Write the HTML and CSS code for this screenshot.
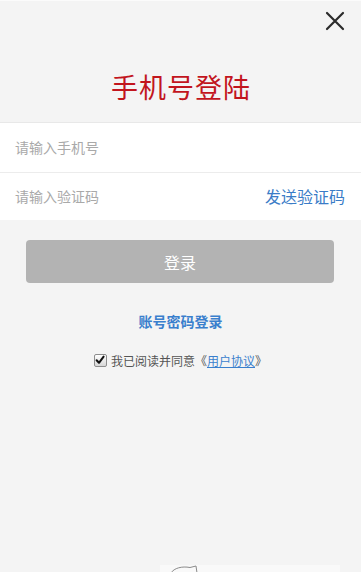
FILE: index.html
```html
<!DOCTYPE html>
<html lang="zh-CN">
<head>
<meta charset="utf-8">
<title>手机号登陆</title>
<link rel="stylesheet" href="styles.css">
</head>
<body>
<div class="page">
  <div class="topbar">
    <svg class="close" width="20" height="20" viewBox="0 0 20 20" aria-label="关闭">
      <path d="M2 2 L18 18 M18 2 L2 18" stroke="#2b2b2b" stroke-width="2.2" stroke-linecap="round" fill="none"/>
    </svg>
  </div>
  <h1 class="title">手机号登陆</h1>
  <div class="panel">
    <div class="row row-first">
      <span class="placeholder">请输入手机号</span>
    </div>
    <div class="row">
      <span class="placeholder">请输入验证码</span>
      <span class="send">发送验证码</span>
    </div>
  </div>
  <div class="btn">登录</div>
  <div class="alt">账号密码登录</div>
  <div class="agree">
    <span class="check">
      <svg width="10" height="10" viewBox="0 0 10 10"><path d="M1.6 5.2 L4 7.8 L8.6 1.6" stroke="#111" stroke-width="2" fill="none" stroke-linecap="round" stroke-linejoin="round"/></svg>
    </span>
    <span class="agree-text">我已阅读并同意《<span class="agree-link">用户协议</span>》</span>
  </div>
  <div class="footer-strip">
    <svg width="30" height="8" viewBox="0 0 30 8"><path d="M1 8 C4 3 12 1 20 2.5 L26 1 L27 8" stroke="#8a8a8a" stroke-width="1" fill="none"/></svg>
  </div>
</div>
</body>
</html>
```

FILE: styles.css
```css
html, body {
  margin: 0;
  padding: 0;
  background: #f4f4f4;
}
body {
  font-family: "Noto Sans CJK SC", "Noto Sans", sans-serif;
  width: 361px;
  height: 572px;
  overflow: hidden;
}
.page {
  border-top: 1px solid #fbfbfb;
}
.topbar {
  height: 41px;
  display: flex;
  justify-content: flex-end;
  align-items: flex-start;
  padding-right: 16px;
}
.close {
  margin-top: 10px;
}
.title {
  margin: 30px 0 20px;
  font-size: 27px;
  line-height: 30px;
  font-weight: 400;
  color: #c2151d;
  text-align: center;
  letter-spacing: 1px;
  padding-left: 1px;
}
.panel {
  background: #fff;
  border-top: 1px solid #e8e8e8;
}
.row {
  height: 47px;
  display: flex;
  align-items: center;
  justify-content: space-between;
  padding: 0 16px 2px 15px;
  box-sizing: border-box;
}
.row-first {
  height: 50px;
  border-bottom: 1px solid #ececec;
}
.placeholder {
  font-size: 14px;
  color: #a9a9a9;
}
.send {
  font-size: 16px;
  color: #3a7cc7;
}
.btn {
  margin: 20px 27px 0 26px;
  height: 43px;
  border-radius: 4px;
  background: #b3b3b3;
  color: #fff;
  font-size: 16px;
  display: flex;
  align-items: center;
  justify-content: center;
}
.alt {
  margin-top: 28px;
  text-align: center;
  font-size: 14px;
  line-height: 20px;
  font-weight: 700;
  color: #3a7fcd;
}
.agree {
  margin-top: 19px;
  display: flex;
  align-items: center;
  justify-content: center;
  height: 20px;
  padding-left: 0;
}
.check {
  width: 11px;
  height: 11px;
  border: 1px solid #8d8d8d;
  border-radius: 2px;
  background: linear-gradient(#ffffff, #d6d6d6);
  display: flex;
  align-items: center;
  justify-content: center;
  margin-right: 4px;
}
.agree-text {
  font-size: 12px;
  color: #555;
}
.agree-link {
  color: #3a7fcd;
  text-decoration: underline;
}
.footer-strip {
  margin: 195px 0 0 160px;
  width: 180px;
  height: 8px;
  background: #f9f9f9;
  padding-left: 10px;
  box-sizing: border-box;
}
.footer-strip svg {
  display: block;
}
```
